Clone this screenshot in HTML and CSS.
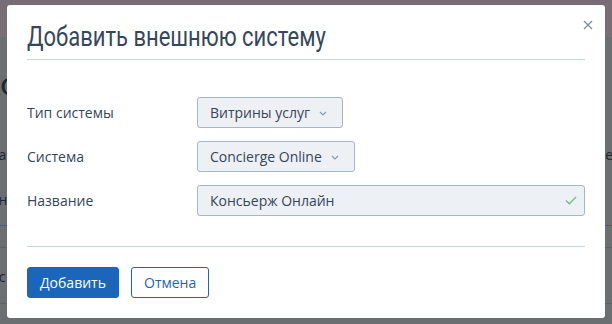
FILE: index.html
```html
<!DOCTYPE html>
<html lang="ru">
<head>
<meta charset="utf-8">
<link rel="stylesheet" href="styles.css">
</head>
<body>
<div class="page">
  <div class="page-top"></div>
  <div class="page-body">
    <div class="bg-big">Ко</div>
    <div class="bg-row bg-row1"><span>Ка</span><span>ен</span></div>
    <div class="bg-row bg-row2"><span>Кн</span></div>
    <div class="bg-line bg-line-blue"></div>
    <div class="bg-line bg-line-grey1"></div>
    <div class="bg-row bg-row3"><span>Сс</span></div>
    <div class="bg-line bg-line-grey2"></div>
  </div>
</div>
<div class="modal">
  <div class="modal-header">
    <h1 class="modal-title">Добавить внешнюю систему</h1>
    <button class="close" aria-label="Закрыть">
      <svg width="10" height="10" viewBox="0 0 10 10"><path d="M1 1L9 9M9 1L1 9" stroke="#7d8ea5" stroke-width="1.3" fill="none"/></svg>
    </button>
  </div>
  <div class="modal-body">
    <div class="form-row">
      <div class="label">Тип системы</div>
      <div class="select">Витрины услуг
        <svg class="chev" width="8" height="5" viewBox="0 0 8 5"><path d="M1 1L4 4L7 1" stroke="#8a99ad" stroke-width="1.2" fill="none"/></svg>
      </div>
    </div>
    <div class="form-row">
      <div class="label">Система</div>
      <div class="select">Concierge Online
        <svg class="chev" width="8" height="5" viewBox="0 0 8 5"><path d="M1 1L4 4L7 1" stroke="#8a99ad" stroke-width="1.2" fill="none"/></svg>
      </div>
    </div>
    <div class="form-row">
      <div class="label">Название</div>
      <div class="input">Консьерж Онлайн
        <svg class="check" width="12" height="9" viewBox="0 0 12 9"><path d="M1 4.5L4.3 7.8L11 1" stroke="#73c27f" stroke-width="1.4" fill="none"/></svg>
      </div>
    </div>
  </div>
  <div class="modal-footer">
    <button class="btn btn-primary">Добавить</button>
    <button class="btn btn-outline">Отмена</button>
  </div>
</div>
</body>
</html>
```

FILE: styles.css
```css
* { box-sizing: border-box; }
html, body { margin: 0; padding: 0; }
body {
  width: 612px;
  height: 324px;
  overflow: hidden;
  background: #6e6f70;
  font-family: "Open Sans", "Noto Sans", sans-serif;
  position: relative;
}
.page { height: 324px; display: flex; flex-direction: column; }
.page-top { height: 37px; background: #786d74; }
.page-body { flex: 1; background: #6c6f71; position: relative; color: #1f2a38; }
.bg-big { font-family: Roboto, sans-serif; font-size: 32px; color: #1c2530; position: absolute; left: -20px; top: 28px; }
.bg-row { position: absolute; left: -10px; right: -10px; display: flex; justify-content: space-between; font-size: 14px; color: #20262e; }
.bg-row1 { top: 108px; }
.bg-row2 { top: 153px; }
.bg-row3 { top: 230px; }
.bg-line { position: absolute; left: 0; right: 0; height: 1px; }
.bg-line-blue { top: 188px; background: #3f5f86; }
.bg-line-grey1 { top: 210px; background: #5e6163; }
.bg-line-grey2 { top: 266px; background: #5e6163; }

.modal {
  position: absolute;
  left: 7px;
  top: 5px;
  width: 598px;
  height: 313px;
  background: #fff;
  border-radius: 3px;
  padding: 0 20px;
  display: flex;
  flex-direction: column;
}
.modal-header {
  height: 55px;
  border-bottom: 1px solid #cbd4e1;
  position: relative;
  padding-top: 18px;
}
.modal-title {
  margin: 0;
  font-family: Roboto, sans-serif;
  font-weight: 400;
  font-size: 28px;
  line-height: 28px;
  color: #36475d;
  white-space: nowrap;
  transform: scaleX(0.785);
  transform-origin: left center;
}
.close {
  position: absolute;
  right: -8px;
  top: 15px;
  border: 0;
  background: none;
  padding: 0;
  width: 10px;
  height: 10px;
  display: flex;
}
.modal-body {
  padding-top: 37px;
  display: flex;
  flex-direction: column;
  gap: 13px;
  border-bottom: 1px solid #cbd4e1;
  padding-bottom: 30px;
}
.form-row { display: flex; align-items: center; height: 31px; }
.label { width: 170px; font-size: 14px; color: #36465a; }
.select, .input {
  height: 31px;
  background: #edf0f4;
  border: 1px solid #a7b5c8;
  border-radius: 3px;
  display: flex;
  align-items: center;
  padding: 0 15px 0 12px;
  font-size: 14px;
  color: #36465a;
}
.chev { margin-left: 9px; margin-top: 1px; }
.input { flex: 1; justify-content: space-between; padding-right: 13px; }
.check { margin-right: -6px; }
.modal-footer { padding-top: 20px; display: flex; gap: 12px; }
.btn {
  height: 31px;
  border-radius: 3px;
  font-family: "Open Sans", sans-serif;
  font-size: 14px;
  padding: 0 12px;
}
.btn-primary { background: #1b66bb; border: 1px solid #1b66bb; color: #fff; width: 92px; }
.btn-outline { background: #fff; border: 1px solid #1b66bb; color: #1b66bb; width: 78px; }
```
